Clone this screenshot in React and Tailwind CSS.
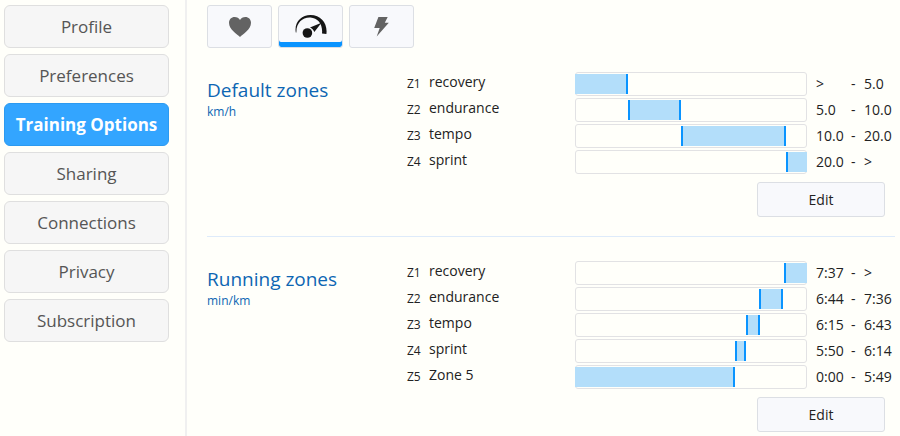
import React, {useState} from "react";

const menuItems = [
    "Profile",
    "Preferences",
    "Training Options",
    "Sharing",
    "Connections",
    "Privacy",
    "Subscription",
];

// start and end are positions on a bar of 232 units
const sections = [
    {
        title: "Default zones",
        unit: "km/h",
        zones: [
            {id: "Z1", name: "recovery", start: 0, end: 53, from: ">", to: "5.0"},
            {id: "Z2", name: "endurance", start: 53, end: 106, from: "5.0", to: "10.0"},
            {id: "Z3", name: "tempo", start: 106, end: 211, from: "10.0", to: "20.0"},
            {id: "Z4", name: "sprint", start: 211, end: 232, from: "20.0", to: ">"},
        ],
    },
    {
        title: "Running zones",
        unit: "min/km",
        zones: [
            {id: "Z1", name: "recovery", start: 209, end: 232, from: "7:37", to: ">"},
            {id: "Z2", name: "endurance", start: 184, end: 208, from: "6:44", to: "7:36"},
            {id: "Z3", name: "tempo", start: 171, end: 185, from: "6:15", to: "6:43"},
            {id: "Z4", name: "sprint", start: 160, end: 171, from: "5:50", to: "6:14"},
            {id: "Z5", name: "Zone 5", start: 0, end: 160, from: "0:00", to: "5:49"},
        ],
    },
];

const HeartIcon = () => (
    <svg className="h-5 w-[22px]" viewBox="0 0 22 20" fill="#636363">
        <path d="M11 20C8 17 0 12.500 0 5.800 0 2.300 2.500 0 5.600 0 8 0 10 1 11 2.900 12 1 14 0 16.400 0 19.500 0 22 2.300 22 5.800 22 12.500 14 17 11 20z"/>
    </svg>
);

const GaugeIcon = () => (
    <svg className="h-6 w-8" viewBox="0 0 32 24" fill="#151515">
        <path d="M.8 17.500C-1 7 6.500 0 15.500 0 26 0 32.800 8.500 31.400 19L27 18.500C28 9.500 23 3 15.500 2.500 7.500 2 1 8 1.400 17.500z"/>
        <circle cx="12.400" cy="18" r="4.800"/>
        <path d="M15 12.600L26.500 7.800 19.300 17C18.500 15 17 13.200 15 12.600z"/>
    </svg>
);

const BoltIcon = () => (
    <svg className="h-5 w-[15px]" viewBox="0 0 15 20" fill="#636363">
        <path d="M4.400 0H13.700L10.800 5.700H14.800L2.700 19.600 5.700 11H.2z"/>
    </svg>
);

const sports = [
    {label: "Heart rate", Icon: HeartIcon},
    {label: "Speed", Icon: GaugeIcon},
    {label: "Power", Icon: BoltIcon},
];

const ZoneBar = ({start, end}) => (
    <div className="h-6 rounded-[3px] border border-[#e2e2e4] py-px">
        <div className="-mx-px h-full">
            <div
                className={`h-full border-[#0a94ff] bg-[#b3defa] ${start > 0 ? "border-l-2" : ""} ${end < 232 ? "border-r-2" : ""}`}
                style={{marginLeft: `${start / 2.32}%`, width: `${(end - start) / 2.32}%`}}
            />
        </div>
    </div>
);

const ZoneSection = ({title, unit, zones}) => (
    <section className="pt-[23px] pb-[19px] not-last:border-b not-last:border-[#deebfa]">
        <div className="flex">
            <div className="w-[200px] shrink-0 pt-[5px] text-[#0d66b3]">
                <h2 className="text-[19px] leading-7">{title}</h2>
                <p className="text-[12px] leading-4">{unit}</p>
            </div>
            <table className="flex-1 table-fixed border-collapse text-[14px] leading-5 text-[#222]">
                <colgroup>
                    <col className="w-[22px]"/>
                    <col className="w-[146px]"/>
                    <col/>
                    <col className="w-[44px]"/>
                    <col className="w-[13px]"/>
                    <col className="w-[31px]"/>
                </colgroup>
                <tbody>
                    {zones.map((zone) => (
                        <tr key={zone.id} className="h-[26px]">
                            <td className="p-0 text-[12px]">{zone.id}</td>
                            <td className="p-0 pb-1">{zone.name}</td>
                            <td className="p-0"><ZoneBar start={zone.start} end={zone.end}/></td>
                            <td className="p-0 pl-[9px]">{zone.from}</td>
                            <td className="p-0">-</td>
                            <td className="p-0">{zone.to}</td>
                        </tr>
                    ))}
                </tbody>
            </table>
        </div>
        <div className="flex justify-end pt-[7px] pr-[10px]">
            <button className="h-[35px] w-32 rounded-[3px] border border-[#dcdfe4] bg-[#f8f9fc] text-[14px] text-[#222]">
                Edit
            </button>
        </div>
    </section>
);

const App = () => {
    const [page, setPage] = useState("Training Options");
    const [sport, setSport] = useState("Speed");

    return (
        <div className="flex min-h-screen bg-[#fffffa] font-['Open_Sans',sans-serif]">
            <nav className="flex w-[187px] shrink-0 flex-col gap-[6px] border-r-2 border-[#f0f0f0] pt-[5px] pr-4 pl-1">
                {menuItems.map((item) => (
                    <button
                        key={item}
                        onClick={() => setPage(item)}
                        className={`h-[43px] rounded-md border text-[17px] ${
                            item === page
                                ? "border-[#2c9af0] bg-[#33a5ff] font-bold text-white"
                                : "border-[#dfdfdf] bg-[#f6f6f6] text-[#555]"
                        }`}
                    >
                        {item}
                    </button>
                ))}
            </nav>
            <main className="min-w-0 flex-1 pt-[5px] pr-[5px] pl-5">
                <div className="flex gap-[6px]">
                    {sports.map(({label, Icon}) => (
                        <button
                            key={label}
                            aria-label={label}
                            onClick={() => setSport(label)}
                            className={`flex h-[43px] w-[65px] items-center justify-center rounded-[3px] border border-[#dcdfe4] bg-[#f8f9fc] ${
                                label === sport ? "shadow-[inset_0_-5px_0_#0a94ff]" : ""
                            }`}
                        >
                            <Icon/>
                        </button>
                    ))}
                </div>
                {sections.map((section) => (
                    <ZoneSection key={section.title} {...section}/>
                ))}
            </main>
        </div>
    );
};

export default App;
